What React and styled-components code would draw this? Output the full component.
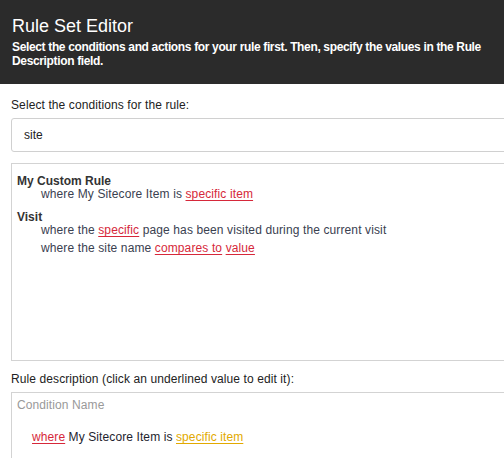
import React from "react";
import styled, { createGlobalStyle } from "styled-components";

const Global = createGlobalStyle`
  html, body { margin: 0; padding: 0; background: #fff; overflow: hidden; }
  body { font-family: "Liberation Sans", Arial, sans-serif; }
`;

const Page = styled.div`
  width: 640px;
`;

const Header = styled.header`
  background: #2b2b2b;
  color: #fff;
  padding: 15px 12px 15px 12px;
  height: 54px;
`;

const Title = styled.h1`
  margin: 0;
  font-size: 18px;
  font-weight: normal;
  line-height: 22px;
`;

const Subtitle = styled.p`
  margin: 3px 0 0;
  font-size: 12px;
  font-weight: bold;
  line-height: 14px;
  width: 490px;
  letter-spacing: -0.35px;
`;

const Body = styled.main`
  padding: 14px 0 0 11px;
`;

const Label = styled.div`
  font-size: 12px;
  color: #222;
  line-height: 14px;
  letter-spacing: 0.1px;
  margin-bottom: 6px;
`;

const Search = styled.div`
  height: 32px;
  border: 1px solid #d0d0d0;
  border-radius: 3px;
  display: flex;
  align-items: center;
  padding-left: 12px;
  font-size: 12px;
  color: #222;
  margin-bottom: 11px;
`;

const Box = styled.div`
  border: 1px solid #d3d3d3;
  height: ${(p) => p.$h}px;
  padding: ${(p) => p.$pad};
  box-sizing: border-box;
  margin-bottom: ${(p) => p.$mb || 0}px;
`;

const Group = styled.div`
  & + & { margin-top: 10px; }
`;

const GroupTitle = styled.div`
  font-size: 12px;
  font-weight: bold;
  color: #333;
  line-height: 13px;
`;

const Item = styled.div`
  font-size: 12px;
  color: #3a4150;
  line-height: 13px;
  letter-spacing: 0.12px;
  padding-left: 24px;
  margin-bottom: 5px;
`;

const Link = styled.span`
  color: ${(p) => p.$c || "#d6283a"};
  text-decoration: underline;
  text-decoration-color: ${(p) => p.$u || "#d6283a"};
  text-underline-offset: 2px;
`;

const Muted = styled.div`
  font-size: 12px;
  color: #999;
  line-height: 14px;
  letter-spacing: 0.1px;
`;

const DescLine = styled.div`
  font-size: 12px;
  color: #1e1e2e;
  line-height: 14px;
  letter-spacing: 0.1px;
  padding-left: 15px;
  margin-top: 18px;
`;

export default function App() {
  return (
    <Page>
      <Global />
      <Header>
        <Title>Rule Set Editor</Title>
        <Subtitle>
          Select the conditions and actions for your rule first. Then, specify the values in the Rule Description field.
        </Subtitle>
      </Header>
      <Body>
        <Label>Select the conditions for the rule:</Label>
        <Search>site</Search>
        <Box $h={198} $pad="11px 5px" $mb={11}>
          <Group>
            <GroupTitle>My Custom Rule</GroupTitle>
            <Item>
              where My Sitecore Item is <Link>specific item</Link>
            </Item>
          </Group>
          <Group>
            <GroupTitle>Visit</GroupTitle>
            <Item>
              where the <Link>specific</Link> page has been visited during the current visit
            </Item>
            <Item>
              where the site name <Link>compares to</Link> <Link>value</Link>
            </Item>
          </Group>
        </Box>
        <Label>Rule description (click an underlined value to edit it):</Label>
        <Box $h={80} $pad="5px 5px">
          <Muted>Condition Name</Muted>
          <DescLine>
            <Link>where</Link> My Sitecore Item is{" "}
            <Link $c="#e2a900" $u="#e2a900">specific item</Link>
          </DescLine>
        </Box>
      </Body>
    </Page>
  );
}
